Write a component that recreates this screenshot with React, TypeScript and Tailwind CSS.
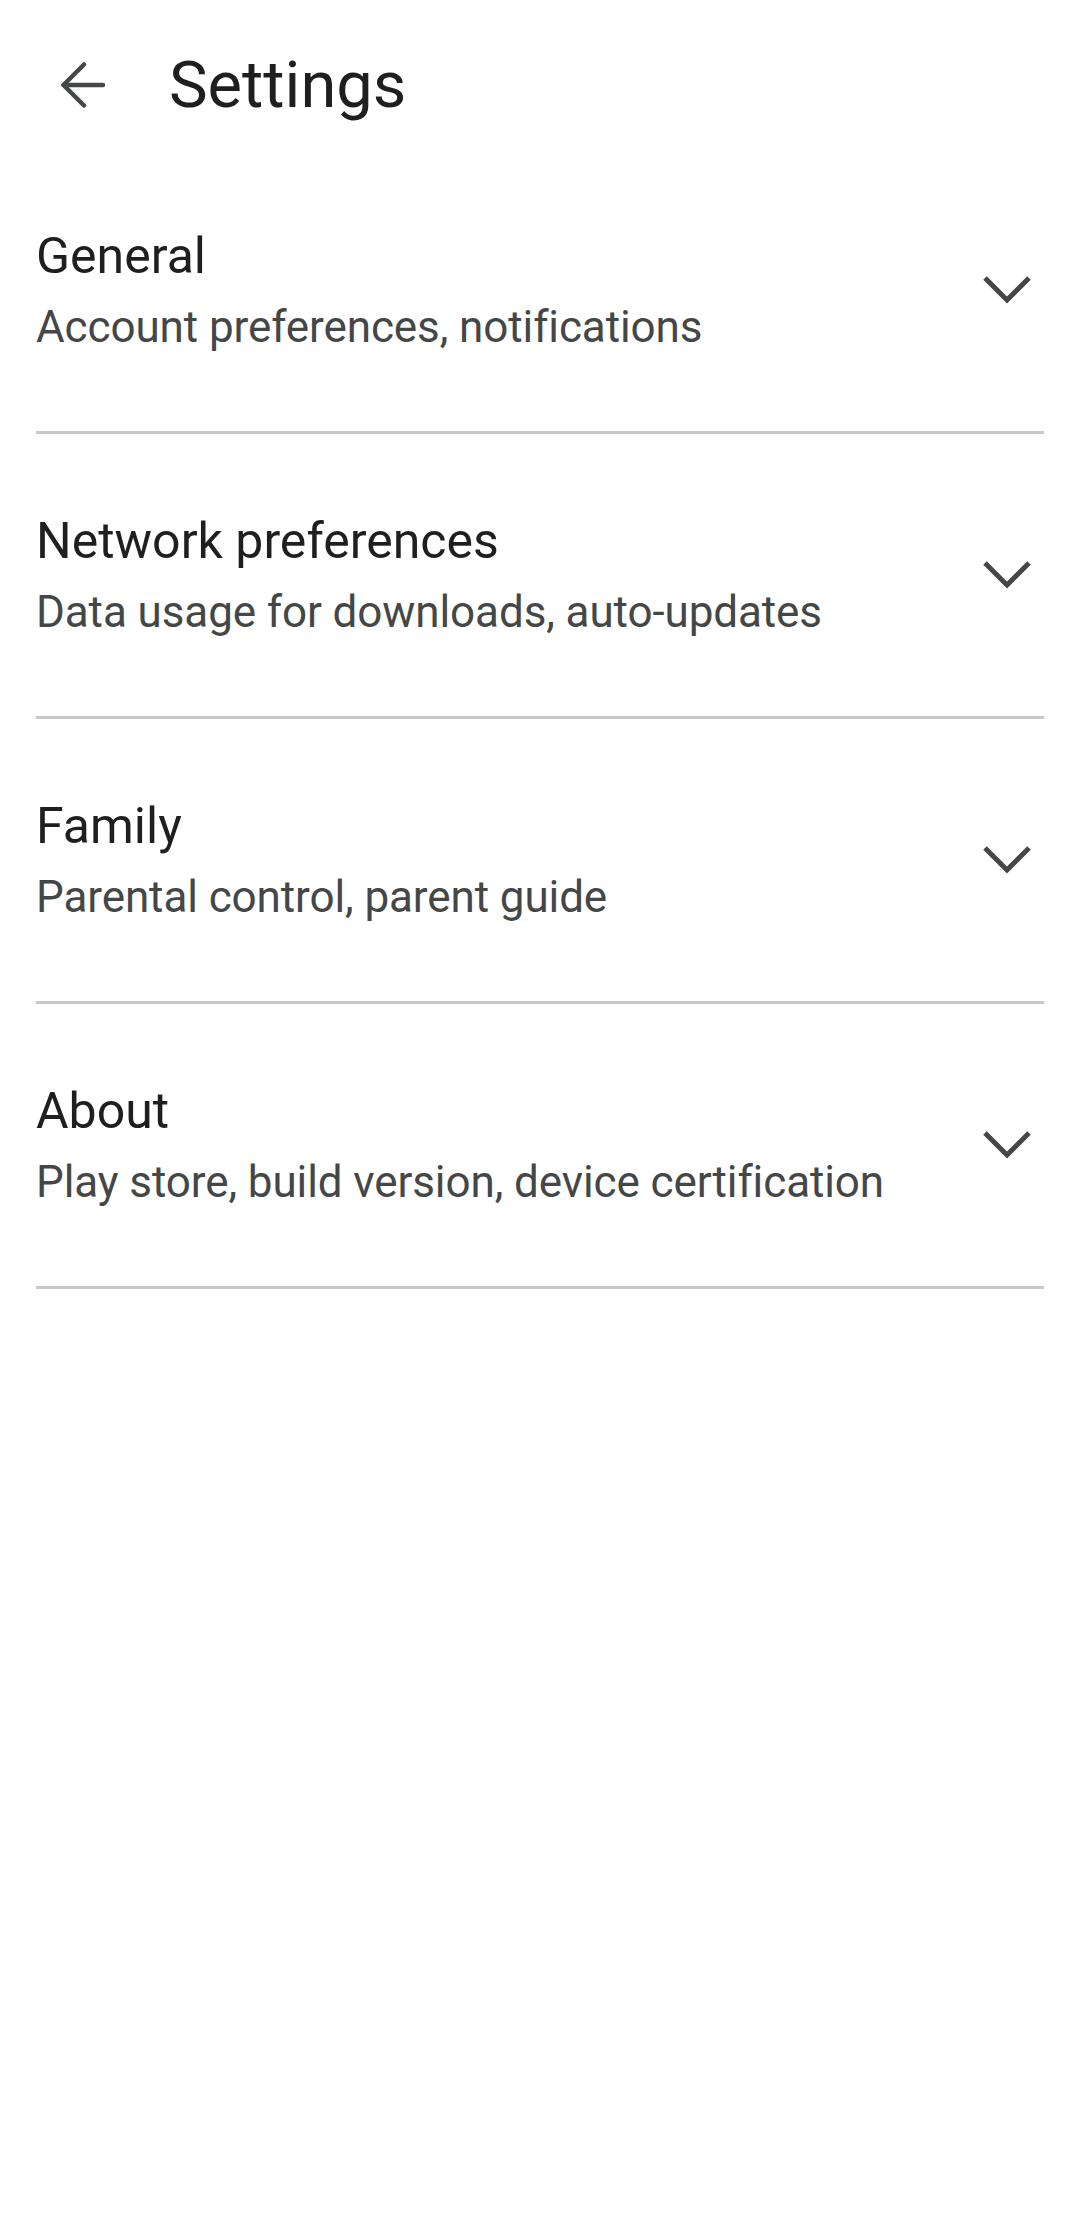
import React from 'react';

interface SettingsSection {
    title: string;
    description: string;
}

const sections: SettingsSection[] = [
    { title: 'General', description: 'Account preferences, notifications' },
    { title: 'Network preferences', description: 'Data usage for downloads, auto-updates' },
    { title: 'Family', description: 'Parental control, parent guide' },
    { title: 'About', description: 'Play store, build version, device certification' },
];

const BackArrow = () => (
    <svg width="50" height="50" viewBox="0 0 50 50" fill="none" stroke="#444746" strokeWidth="4.5" strokeLinecap="round" strokeLinejoin="round">
        <line x1="4.5" y1="25" x2="44" y2="25" />
        <polyline points="25,4.5 4.5,25 25,45.5" />
    </svg>
);

const Chevron = () => (
    <svg width="48" height="30" viewBox="0 0 48 30" fill="none" stroke="#444746" strokeWidth="5">
        <polyline points="2,3 24,25 46,3" />
    </svg>
);

const SectionRow: React.FC<SettingsSection & { first?: boolean }> = ({ title, description, first }) => {
    return (
        <div className="border-b-[3px] border-[#c7c7c7]">
            <div className={`flex items-center justify-between ${first ? 'pt-[61px]' : 'pt-[82px]'} pb-[82px]`}>
                <div className="flex flex-col">
                    <span className="text-[50px] leading-[50px] text-[#1f1f1f]">{title}</span>
                    <span className="mt-[24px] text-[44px] leading-[44px] tracking-[-0.1px] text-[#444746]">{description}</span>
                </div>
                <div className="mr-[13px]">
                    <Chevron />
                </div>
            </div>
        </div>
    );
};

export default function App() {
    return (
        <div className="min-h-[2214px] w-[1080px] bg-white" style={{ fontFamily: 'Roboto, "Noto Sans", sans-serif' }}>
            <div className="flex h-[170px] items-center pl-[59px]">
                <BackArrow />
                <h1 className="ml-[60px] text-[65px] leading-[65px] font-normal text-[#1f1f1f]">Settings</h1>
            </div>

            <div className="mx-[36px]">
                {sections.map((s, i) => (
                    <SectionRow key={s.title} title={s.title} description={s.description} first={i === 0} />
                ))}
            </div>
        </div>
    );
}
